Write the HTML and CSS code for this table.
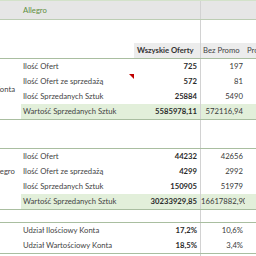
FILE: index.html
```html
<!DOCTYPE html>
<html lang="pl">
<head>
<meta charset="utf-8">
<title>Allegro</title>
<link rel="stylesheet" href="styles.css">
</head>
<body>
<div class="sheet">
  <div class="row band">
    <div class="cell"></div><div class="cell allegro">Allegro</div><div class="cell c"></div><div class="cell"></div><div class="cell"></div>
  </div>
  <div class="row sp sp1">
    <div class="cell"></div><div class="cell"></div><div class="cell c"></div><div class="cell"></div><div class="cell"></div>
  </div>
  <div class="row head">
    <div class="cell"></div><div class="cell"></div>
    <div class="cell c h hb">Wszyskie Oferty</div>
    <div class="cell h">Bez Promo</div>
    <div class="cell h">Promo</div>
  </div>

  <div class="sec">
    <div class="cell lbl lbl1"><span>Konta</span></div>
    <div class="cell b">Ilość Ofert</div><div class="cell c v">725</div><div class="cell d">197</div><div class="cell"></div>
    <div class="cell b note">Ilość Ofert ze sprzedażą</div><div class="cell c v">572</div><div class="cell d">81</div><div class="cell"></div>
    <div class="cell b">Ilość Sprzedanych Sztuk</div><div class="cell c v">25884</div><div class="cell d">5490</div><div class="cell"></div>
    <div class="cell b g">Wartość Sprzedanych Sztuk</div><div class="cell c v g">5585978,11</div><div class="cell d g">572116,94</div><div class="cell g"></div>
  </div>

  <div class="row sp sp2">
    <div class="cell"></div><div class="cell"></div><div class="cell c"></div><div class="cell"></div><div class="cell"></div>
  </div>

  <div class="sec">
    <div class="cell lbl lbl2"><span>Allegro</span></div>
    <div class="cell b">Ilość Ofert</div><div class="cell c v">44232</div><div class="cell d">42656</div><div class="cell"></div>
    <div class="cell b">Ilość Ofert ze sprzedażą</div><div class="cell c v">4299</div><div class="cell d">2992</div><div class="cell"></div>
    <div class="cell b">Ilość Sprzedanych Sztuk</div><div class="cell c v">150905</div><div class="cell d">51979</div><div class="cell"></div>
    <div class="cell"></div>
    <div class="cell b g">Wartość Sprzedanych Sztuk</div><div class="cell c v g">30233929,85</div><div class="cell d g">16617882,90</div><div class="cell g"></div>
  </div>

  <div class="row sp sp3">
    <div class="cell"></div><div class="cell"></div><div class="cell c"></div><div class="cell"></div><div class="cell"></div>
  </div>

  <div class="sec">
    <div class="cell"></div><div class="cell b">Udział Ilościowy Konta</div><div class="cell c v">17,2%</div><div class="cell d">10,6%</div><div class="cell"></div>
    <div class="cell"></div><div class="cell b">Udział Wartościowy Konta</div><div class="cell c v">18,5%</div><div class="cell d">3,4%</div><div class="cell"></div>
  </div>

  <div class="row sp sp4">
    <div class="cell"></div><div class="cell"></div><div class="cell c"></div><div class="cell"></div><div class="cell"></div>
  </div>
</div>
</body>
</html>
```
FILE: styles.css
```css
html, body {
  margin: 0;
  padding: 0;
  background: #ffffff;
}
body {
  width: 256px;
  height: 256px;
  overflow: hidden;
  font-family: Lato, "Open Sans", sans-serif;
  font-size: 7.7px;
  color: #444444;
}
.sheet {
  width: 256px;
}
.row, .sec {
  display: grid;
  grid-template-columns: 21px 113px 67px 44px 1fr;
  box-sizing: border-box;
}
.sec {
  grid-auto-rows: 15px;
  border-bottom: 1px solid #a9bea0;
}
.cell {
  box-sizing: border-box;
  white-space: nowrap;
  overflow: hidden;
  line-height: 15px;
}
.c {
  border-right: 1px solid #d2d2d2;
}
.band {
  height: 20px;
  background: #e6e6e6;
  border-top: 1px solid #d3e2ca;
  border-bottom: 1px solid #bccdb3;
}
.band .cell {
  line-height: 18px;
}
.allegro {
  padding-left: 2px;
  color: #5f8f3e;
}
.sp1 { height: 23px; }
.sp2 { height: 29px; border-bottom: 1px solid #a9bea0; }
.sp3 { height: 13px; border-bottom: 1px solid #a9bea0; }
.sp4 { height: 10px; }
.head {
  height: 16px;
  border-bottom: 1px solid #a9bea0;
}
.head .cell { line-height: 15px; }
.h {
  background: #ececec;
  padding-left: 2px;
  color: #444444;
}
.hb {
  padding-left: 3px;
  font-weight: 700;
  color: #333333;
}
.b {
  padding-left: 2px;
}
.v {
  text-align: right;
  padding-right: 3px;
  font-weight: 700;
  color: #2a2a2a;
}
.d {
  text-align: right;
  padding-right: 2px;
  color: #3a3a3a;
}
.g {
  background: #e2efda;
}
.lbl {
  grid-column: 1;
  display: flex;
  align-items: center;
  overflow: hidden;
}
.lbl1 { grid-row: 1 / span 4; }
.lbl2 { grid-row: 1 / span 3; }
.lbl1 span { margin-left: -5px; }
.lbl2 span { margin-left: -9px; }
.note {
  position: relative;
}
.note::after {
  content: "";
  position: absolute;
  top: 0;
  right: 0;
  border-top: 5px solid #c00000;
  border-left: 5px solid transparent;
}
```
